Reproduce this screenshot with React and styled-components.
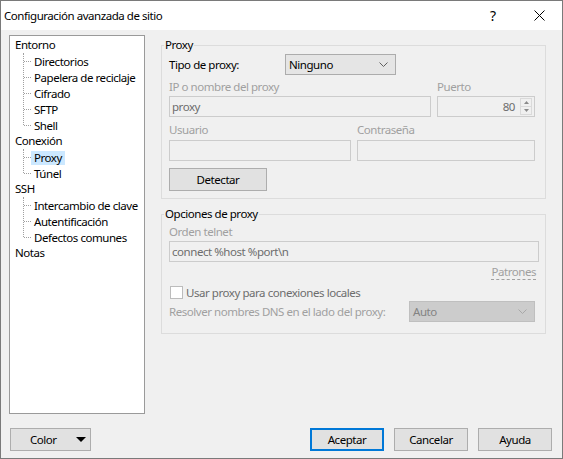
import React from "react";
import styled, { createGlobalStyle, css } from "styled-components";

const GlobalStyle = createGlobalStyle`
  html, body {
    margin: 0;
    padding: 0;
    background: #f0f0f0;
  }
  * {
    box-sizing: border-box;
  }
`;

const FONT = `"Segoe UI", "Noto Sans", sans-serif`;

const Window = styled.div`
  width: 563px;
  height: 459px;
  display: flex;
  flex-direction: column;
  border: 1px solid #7a7a7a;
  background: #f0f0f0;
  font-family: ${FONT};
  font-size: 11.5px;
  letter-spacing: -0.45px;
  white-space: nowrap;
  color: #000;
`;

const TitleBar = styled.div`
  height: 29px;
  display: flex;
  align-items: center;
  background: #fff;
  padding-left: 3px;
`;

const TitleText = styled.div`
  flex: 1;
`;

const TitleButton = styled.div`
  width: 46px;
  height: 29px;
  display: flex;
  align-items: center;
  justify-content: center;
  font-size: 14px;
  letter-spacing: 0;
  color: #000;
`;

const Body = styled.div`
  display: flex;
  padding: 5px 0 0 8px;
`;

const Tree = styled.div`
  width: 136px;
  height: 379px;
  background: #fff;
  border: 1px solid #9a9a9a;
  padding: 1px 0 0 0;
`;

const Parent = styled.div`
  height: 16px;
  line-height: 16px;
  padding-left: 5px;
`;

const Children = styled.div`
  position: relative;
  &::before {
    content: "";
    position: absolute;
    left: 13px;
    top: 0;
    bottom: 8px;
    border-left: 1px dotted #a0a0a0;
  }
`;

const Child = styled.div`
  position: relative;
  height: 16px;
  display: flex;
  align-items: center;
  padding-left: 21px;
  &::before {
    content: "";
    position: absolute;
    left: 14px;
    top: 8px;
    width: 7px;
    border-top: 1px dotted #a0a0a0;
  }
`;

const ChildLabel = styled.span`
  line-height: 14px;
  padding: 0 3px;
  margin-top: 1px;
  ${({ $selected }) =>
    $selected &&
    css`
      background: #cce8ff;
    `}
`;

const Main = styled.div`
  margin-left: 16px;
  width: 385px;
  display: flex;
  flex-direction: column;
  padding-top: 2px;
`;

const Group = styled.fieldset`
  margin: ${({ $mt }) => $mt || 0}px 0 0 0;
  padding: 0 9px ${({ $pb }) => $pb || 0}px 7px;
  border: 1px solid #dcdcdc;
  min-width: 0;
`;

const Legend = styled.legend`
  padding: 0 1px;
  margin-left: -5px;
  line-height: 16px;
`;

const Row = styled.div`
  display: flex;
  align-items: center;
  gap: 6px;
  margin-top: ${({ $mt }) => $mt || 0}px;
  height: ${({ $h }) => $h || 21}px;
  justify-content: ${({ $jc }) => $jc || "flex-start"};
`;

const Label = styled.div`
  line-height: 16px;
  color: ${({ $disabled }) => ($disabled ? "#a0a0a0" : "#000")};
  width: ${({ $w }) => ($w ? `${$w}px` : "auto")};
  flex: none;
`;

const Field = styled.div`
  width: ${({ $w }) => $w}px;
  height: 21px;
  border: 1px solid #cccccc;
  background: #f0f0f0;
  color: #6d6d6d;
  display: flex;
  align-items: center;
  padding: 0 2px;
  justify-content: ${({ $right }) => ($right ? "flex-end" : "flex-start")};
  flex: none;
`;

const Spinner = styled.div`
  width: 12px;
  height: 17px;
  margin-left: 5px;
  display: flex;
  flex-direction: column;
  border: 1px solid #dadada;
`;

const SpinHalf = styled.div`
  flex: 1;
  display: flex;
  align-items: center;
  justify-content: center;
  & + & {
    border-top: 1px solid #dadada;
  }
`;

const Combo = styled.div`
  width: ${({ $w }) => $w}px;
  height: ${({ $h }) => $h || 21}px;
  display: flex;
  align-items: center;
  justify-content: space-between;
  padding: 0 7px 0 3px;
  background: ${({ $disabled }) => ($disabled ? "#cccccc" : "#e5e5e5")};
  border: 1px solid ${({ $disabled }) => ($disabled ? "#bfbfbf" : "#acacac")};
  color: ${({ $disabled }) => ($disabled ? "#838383" : "#000")};
  flex: none;
`;

const Button = styled.div`
  width: ${({ $w }) => $w}px;
  height: 23px;
  display: flex;
  align-items: center;
  justify-content: center;
  background: #e1e1e1;
  border: 1px solid #adadad;
  flex: none;
  ${({ $default }) =>
    $default &&
    css`
      border: 2px solid #0078d7;
    `}
`;

const ColorButton = styled(Button)`
  justify-content: space-between;
  padding: 0 4px 0 19px;
`;

const Link = styled.span`
  color: #a0a0a0;
  line-height: 14px;
  border-bottom: 1px dashed #a0a0a0;
`;

const Check = styled.div`
  width: 13px;
  height: 13px;
  border: 1px solid #bcbcbc;
  background: #fff;
  margin-left: 1px;
  flex: none;
`;

const CheckLabel = styled.span`
  color: #6d6d6d;
  margin-left: -3px;
`;

const Footer = styled.div`
  display: flex;
  justify-content: space-between;
  padding: 14px 10px 0 9px;
`;

const ButtonGroup = styled.div`
  display: flex;
  gap: 10px;
`;

const Chevron = ({ color = "#606060" }) => (
  <svg width="9" height="5" viewBox="0 0 9 5">
    <path d="M0.5 0.5 L4.5 4.5 L8.5 0.5" fill="none" stroke={color} strokeWidth="1" />
  </svg>
);

const tree = [
  { label: "Entorno", children: ["Directorios", "Papelera de reciclaje", "Cifrado", "SFTP", "Shell"] },
  { label: "Conexión", children: ["Proxy", "Túnel"] },
  { label: "SSH", children: ["Intercambio de clave", "Autentificación", "Defectos comunes"] },
  { label: "Notas", children: [] },
];

export default function App() {
  return (
    <>
      <GlobalStyle />
      <Window>
        <TitleBar>
          <TitleText>Configuración avanzada de sitio</TitleText>
          <TitleButton>?</TitleButton>
          <TitleButton>
            <svg width="11" height="11" viewBox="0 0 11 11">
              <path d="M0.5 0.5 L10.5 10.5 M10.5 0.5 L0.5 10.5" stroke="#000" strokeWidth="1" />
            </svg>
          </TitleButton>
        </TitleBar>
        <Body>
          <Tree>
            {tree.map((node) => (
              <div key={node.label}>
                <Parent>{node.label}</Parent>
                {node.children.length > 0 && (
                  <Children>
                    {node.children.map((c) => (
                      <Child key={c}>
                        <ChildLabel $selected={c === "Proxy"}>{c}</ChildLabel>
                      </Child>
                    ))}
                  </Children>
                )}
              </div>
            ))}
          </Tree>
          <Main>
            <Group $pb={7}>
              <Legend>Proxy</Legend>
              <Row $mt={1}>
                <Label $w={110}>Tipo de proxy:</Label>
                <Combo $w={111}>
                  <span>Ninguno</span>
                  <Chevron />
                </Combo>
              </Row>
              <Row $mt={4} $h={16}>
                <Label $disabled $w={262}>IP o nombre del proxy</Label>
                <Label $disabled>Puerto</Label>
              </Row>
              <Row $mt={1}>
                <Field $w={262}>proxy</Field>
                <Field $w={98} $right>
                  <span>80</span>
                  <Spinner>
                    <SpinHalf>
                      <svg width="5" height="3" viewBox="0 0 5 3">
                        <path d="M2.5 0 L5 3 L0 3 Z" fill="#8a8a8a" />
                      </svg>
                    </SpinHalf>
                    <SpinHalf>
                      <svg width="5" height="3" viewBox="0 0 5 3">
                        <path d="M0 0 L5 0 L2.5 3 Z" fill="#8a8a8a" />
                      </svg>
                    </SpinHalf>
                  </Spinner>
                </Field>
              </Row>
              <Row $mt={5} $h={16}>
                <Label $disabled $w={182}>Usuario</Label>
                <Label $disabled>Contraseña</Label>
              </Row>
              <Row $mt={2}>
                <Field $w={182} />
                <Field $w={178} />
              </Row>
              <Row $mt={7} $h={23}>
                <Button $w={98}>Detectar</Button>
              </Row>
            </Group>
            <Group $mt={7} $pb={11}>
              <Legend>Opciones de proxy</Legend>
              <Row $mt={2} $h={16}>
                <Label $disabled>Orden telnet</Label>
              </Row>
              <Row $mt={1}>
                <Field $w={370}>connect %host %port\n</Field>
              </Row>
              <Row $mt={2} $h={16} $jc="flex-end">
                <Link>Patrones</Link>
              </Row>
              <Row $mt={4} $h={16}>
                <Check />
                <CheckLabel>Usar proxy para conexiones locales</CheckLabel>
              </Row>
              <Row $mt={1}>
                <Label $disabled $w={234}>Resolver nombres DNS en el lado del proxy:</Label>
                <Combo $w={126} $disabled>
                  <span>Auto</span>
                  <Chevron color="#a8a8a8" />
                </Combo>
              </Row>
            </Group>
          </Main>
        </Body>
        <Footer>
          <ColorButton $w={81}>
            <span>Color</span>
            <svg width="10" height="5" viewBox="0 0 10 5">
              <path d="M0 0 L10 0 L5 5 Z" fill="#000" />
            </svg>
          </ColorButton>
          <ButtonGroup>
            <Button $w={74} $default>Aceptar</Button>
            <Button $w={74}>Cancelar</Button>
            <Button $w={74}>Ayuda</Button>
          </ButtonGroup>
        </Footer>
      </Window>
    </>
  );
}
